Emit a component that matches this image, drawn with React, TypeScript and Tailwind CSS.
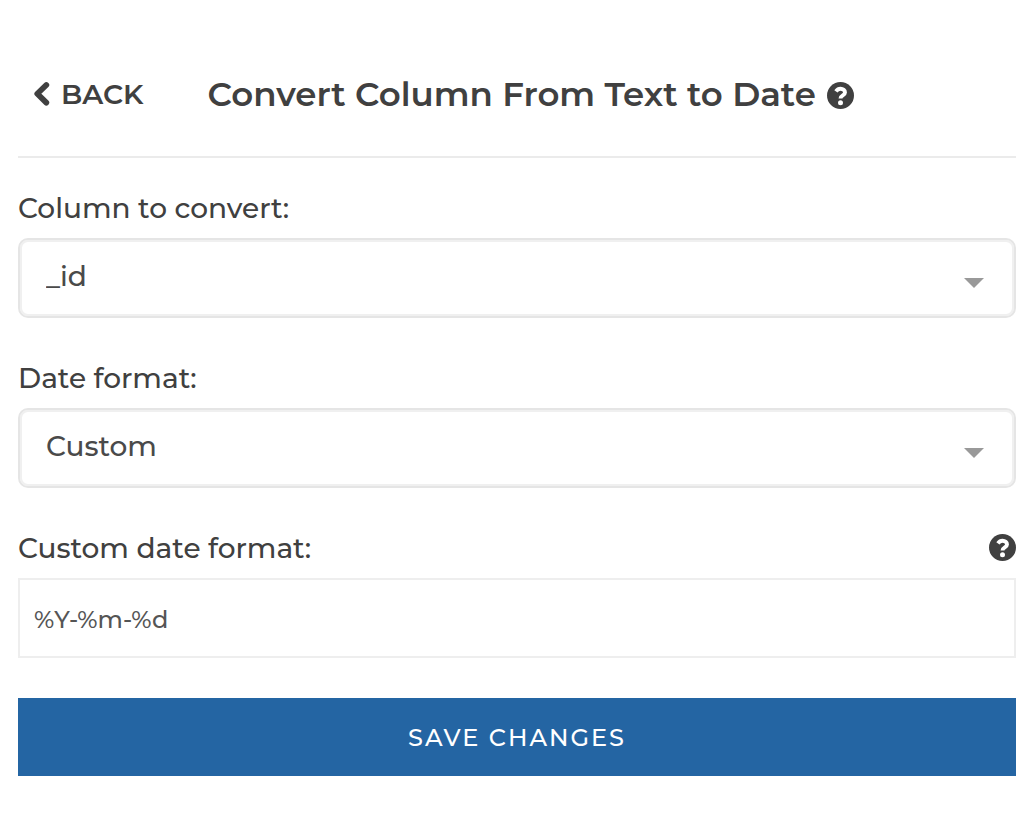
import { useId, useState } from "react";

type SelectFieldProps = {
  label: string;
  options: string[];
  value: string;
  onChange: (value: string) => void;
};

function SelectField({ label, options, value, onChange }: SelectFieldProps) {
  const id = useId();
  return (
    <div className="flex flex-col gap-[10px]">
      <label htmlFor={id} className="text-[28px] leading-10 font-medium">
        {label}
      </label>
      <div className="relative">
        <select
          id={id}
          value={value}
          onChange={(event) => onChange(event.target.value)}
          className="block h-20 w-full appearance-none rounded-[10px] border-2 border-[#e5e5e5] bg-white pr-16 pb-1 pl-[26px] text-[28px] font-medium text-[#4a4a4a] shadow-[inset_0_0_0_2px_#f0f0f0]"
        >
          {options.map((option) => (
            <option key={option}>{option}</option>
          ))}
        </select>
        <svg
          viewBox="0 0 20 10"
          aria-hidden="true"
          className="pointer-events-none absolute top-10 right-8 h-[10px] w-5 fill-[#999999]"
        >
          <path d="M0 0h20L10 10z" />
        </svg>
      </div>
    </div>
  );
}

function ChevronLeft() {
  return (
    <svg viewBox="0 0 18 28" aria-hidden="true" className="h-7 w-[18px]">
      <path
        d="M13.3 5 4.3 13.8 13.3 22.6"
        fill="none"
        stroke="currentColor"
        strokeWidth="5.8"
        strokeLinecap="round"
        strokeLinejoin="round"
      />
    </svg>
  );
}

function QuestionCircle() {
  return (
    <svg viewBox="0 0 27 27" aria-hidden="true" className="size-[27px]">
      <circle cx="13.5" cy="13.5" r="13.5" fill="currentColor" />
      <path
        d="M8.9 9.3C10.1 7.6 11.5 6.7 13.6 6.7C16.1 6.7 18 8.3 18 10.4C18 13.4 13.5 13.2 13.5 16.4"
        fill="none"
        stroke="white"
        strokeWidth="3.9"
      />
      <circle cx="13.5" cy="20.8" r="2.5" fill="white" />
    </svg>
  );
}

export default function App() {
  const [column, setColumn] = useState("_id");
  const [format, setFormat] = useState("Custom");
  const [pattern, setPattern] = useState("%Y-%m-%d");

  return (
    <main className="min-h-screen bg-white pr-5 pl-[18px] font-['Montserrat','Inter',sans-serif] text-[#404040]">
      <header className="flex items-center border-b-2 border-[#ebebeb] pt-16 pb-8 pl-[15px]">
        <button type="button" className="flex items-center gap-[10px] text-[28px] leading-[60px] font-semibold">
          <ChevronLeft />
          BACK
        </button>
        <div className="ml-16 flex items-center gap-[11px]">
          <h1 className="text-[34px] leading-[60px] font-semibold">Convert Column From Text to Date</h1>
          <button type="button" aria-label="Help with converting columns" className="pt-[3px]">
            <QuestionCircle />
          </button>
        </div>
      </header>

      <form className="flex flex-col gap-10 pt-[30px]" onSubmit={(event) => event.preventDefault()}>
        <SelectField label="Column to convert:" options={["_id"]} value={column} onChange={setColumn} />
        <SelectField label="Date format:" options={["Custom"]} value={format} onChange={setFormat} />

        <div className="flex flex-col gap-[10px]">
          <div className="flex items-center justify-between">
            <label htmlFor="pattern" className="text-[28px] leading-10 font-medium">
              Custom date format:
            </label>
            <button type="button" aria-label="Help with date formats" className="pb-px">
              <QuestionCircle />
            </button>
          </div>
          <input
            id="pattern"
            type="text"
            value={pattern}
            onChange={(event) => setPattern(event.target.value)}
            className="h-20 w-full border-2 border-[#eeeeee] bg-white px-[14px] pt-[2px] text-2xl font-medium text-[#555555]"
          />
        </div>

        <button
          type="submit"
          className="h-[78px] w-full bg-[#2465a3] pt-[2px] text-2xl font-medium tracking-[2px] text-white"
        >
          SAVE CHANGES
        </button>
      </form>
    </main>
  );
}
